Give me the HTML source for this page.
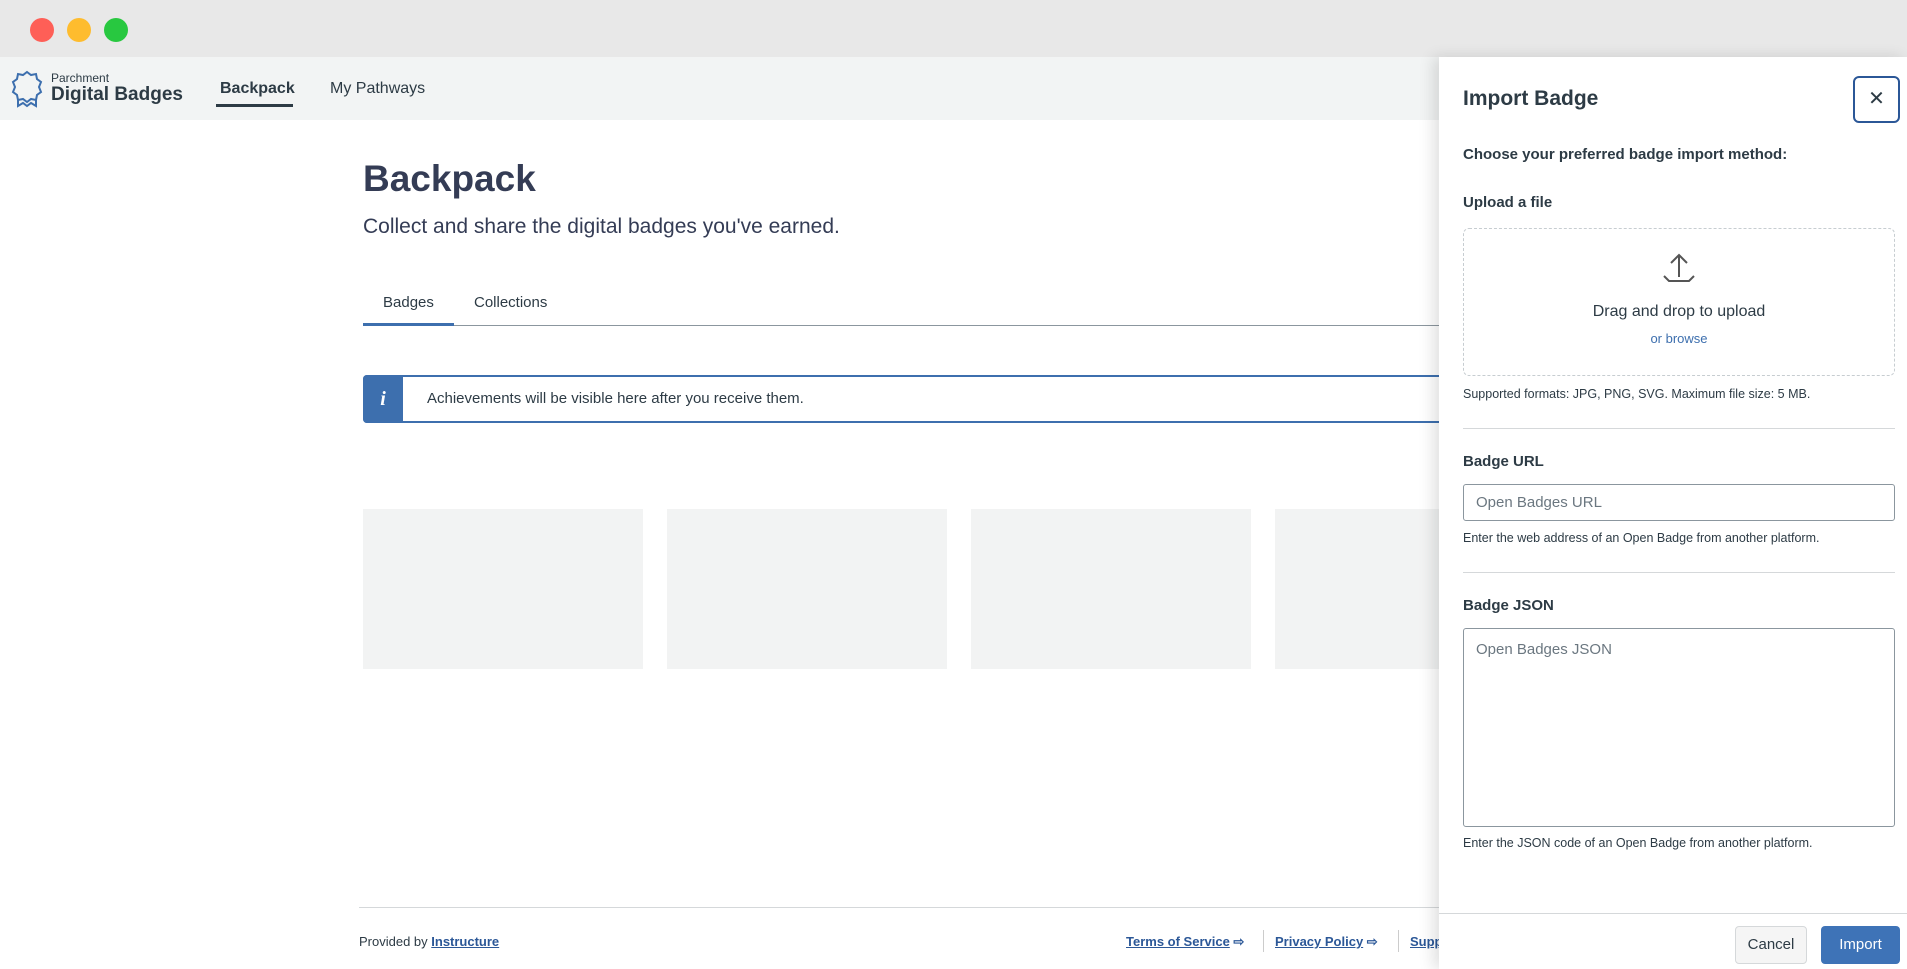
<!DOCTYPE html>
<html><head><meta charset="utf-8"><style>
*{box-sizing:border-box;margin:0;padding:0}
body{width:1907px;height:969px;overflow:hidden;background:#fff;font-family:"Liberation Sans",sans-serif;color:#2d3b45;position:relative}
.a{position:absolute;white-space:nowrap}
.dot{position:absolute;top:18px;width:24px;height:24px;border-radius:50%}
.card{position:absolute;top:509px;width:280px;height:160px;background:#f2f3f3}
.lbl{font-weight:bold;font-size:15px;color:#2d3b45}
.help{font-size:12.5px;color:#2d3b45}
</style></head><body>
<div class="a" style="left:0;top:0;width:1907px;height:57px;background:#e8e8e8"></div>
<div class="dot" style="left:30px;background:#fe5f57"></div>
<div class="dot" style="left:67px;background:#febc2e"></div>
<div class="dot" style="left:104px;background:#28c840"></div>
<div class="a" style="left:0;top:57px;width:1907px;height:63px;background:#f2f4f4"></div>
<svg class="a" style="left:10px;top:70px" width="34" height="38" viewBox="0 0 34 38"><path d="M17 2 l4 3 5-1 1 5 4 3-2 5 2 5-4 3-1 5-5-1-4 3-4-3-5 1-1-5-4-3 2-5-2-5 4-3 1-5 5 1z" fill="none" stroke="#3d6fae" stroke-width="2"/><path d="M8 30 v6 l5-3 4 3 4-3 5 3v-6" fill="none" stroke="#3d6fae" stroke-width="2"/></svg>
<div class="a" style="left:51px;top:71px;font-size:12px;color:#2d3b45">Parchment</div>
<div class="a" style="left:51px;top:84px;font-size:19px;font-weight:bold;color:#2d3b45">Digital Badges</div>
<div class="a" style="left:220px;top:80px;font-size:16px;font-weight:bold">Backpack</div>
<div class="a" style="left:216px;top:104px;width:77px;height:3px;background:#2d3b45"></div>
<div class="a" style="left:330px;top:80px;font-size:16px">My Pathways</div>
<div class="a" style="left:363px;top:158px;font-size:37px;font-weight:bold;color:#343c55">Backpack</div>
<div class="a" style="left:363px;top:215px;font-size:21px;color:#343c55">Collect and share the digital badges you've earned.</div>
<div class="a" style="left:383px;top:294px;font-size:15px">Badges</div>
<div class="a" style="left:474px;top:294px;font-size:15px">Collections</div>
<div class="a" style="left:363px;top:325px;width:1100px;height:1px;background:#8b969e"></div>
<div class="a" style="left:363px;top:323px;width:91px;height:3px;background:#3d6fae"></div>
<div class="a" style="left:363px;top:375px;width:1100px;height:48px;border:2px solid #3d6fae;border-radius:4px"></div>
<div class="a" style="left:363px;top:375px;width:40px;height:48px;background:#3d6fae;border-radius:4px 0 0 4px;color:#fff;font:italic bold 20px 'Liberation Serif',serif;text-align:center;line-height:48px">i</div>
<div class="a" style="left:427px;top:390px;font-size:15px">Achievements will be visible here after you receive them.</div>
<div class="card" style="left:363px"></div><div class="card" style="left:667px"></div><div class="card" style="left:971px"></div><div class="card" style="left:1275px"></div>
<div class="a" style="left:359px;top:907px;width:1100px;height:1px;background:#d5d8da"></div>
<div class="a" style="left:359px;top:934px;font-size:13px">Provided by <u style="color:#2b5797;font-weight:bold">Instructure</u></div>
<div class="a" style="left:1126px;top:934px;font-size:13px;color:#2b5797;font-weight:bold"><u>Terms of Service</u> ⇨</div>
<div class="a" style="left:1263px;top:930px;width:1px;height:22px;background:#ccc"></div>
<div class="a" style="left:1275px;top:934px;font-size:13px;color:#2b5797;font-weight:bold"><u>Privacy Policy</u> ⇨</div>
<div class="a" style="left:1398px;top:930px;width:1px;height:22px;background:#ccc"></div>
<div class="a" style="left:1410px;top:934px;font-size:13px;color:#2b5797;font-weight:bold"><u>Support</u></div>
<!-- panel -->
<div class="a" style="left:1439px;top:57px;width:468px;height:912px;background:#fff;box-shadow:-6px 0 14px rgba(0,0,0,.12)"></div>
<div class="a" style="left:1463px;top:87px;font-size:21px;font-weight:bold;color:#2d3b45">Import Badge</div>
<div class="a" style="left:1853px;top:76px;width:47px;height:47px;border:2px solid #2b5797;border-radius:6px;text-align:center;line-height:42px;font-size:20px;color:#2d3b45">✕</div>
<div class="a lbl" style="left:1463px;top:146px">Choose your preferred badge import method:</div>
<div class="a lbl" style="left:1463px;top:194px">Upload a file</div>
<div class="a" style="left:1463px;top:228px;width:432px;height:148px;border:1.5px dashed #c7cdd1;border-radius:6px"></div>
<svg class="a" style="left:1662px;top:252px" width="34" height="34" viewBox="0 0 34 34"><path d="M17 3v22M9 11l8-8 8 8M2 24l5 5h20l5-5" fill="none" stroke="#555" stroke-width="2"/></svg>
<div class="a" style="left:1463px;top:303px;width:432px;text-align:center;font-size:16px">Drag and drop to upload</div>
<div class="a" style="left:1463px;top:331px;width:432px;text-align:center;font-size:13px;color:#3d6fae">or browse</div>
<div class="a help" style="left:1463px;top:387px">Supported formats: JPG, PNG, SVG. Maximum file size: 5 MB.</div>
<div class="a" style="left:1463px;top:428px;width:432px;height:1px;background:#d5d8da"></div>
<div class="a lbl" style="left:1463px;top:453px">Badge URL</div>
<div class="a" style="left:1463px;top:484px;width:432px;height:37px;border:1px solid #8b969e;border-radius:3px;padding:0 12px;line-height:35px;font-size:15px;color:#6b7780">Open Badges URL</div>
<div class="a help" style="left:1463px;top:531px">Enter the web address of an Open Badge from another platform.</div>
<div class="a" style="left:1463px;top:572px;width:432px;height:1px;background:#d5d8da"></div>
<div class="a lbl" style="left:1463px;top:597px">Badge JSON</div>
<div class="a" style="left:1463px;top:628px;width:432px;height:199px;border:1px solid #8b969e;border-radius:3px;padding:12px;font-size:15px;color:#6b7780">Open Badges JSON</div>
<div class="a help" style="left:1463px;top:836px">Enter the JSON code of an Open Badge from another platform.</div>
<div class="a" style="left:1439px;top:913px;width:468px;height:1px;background:#d5d8da"></div>
<div class="a" style="left:1735px;top:926px;width:72px;height:38px;background:#f5f5f5;border:1px solid #d5d8da;border-radius:4px;text-align:center;line-height:36px;font-size:15px">Cancel</div>
<div class="a" style="left:1821px;top:926px;width:79px;height:38px;background:#3e73b7;border-radius:4px;text-align:center;line-height:38px;font-size:15px;color:#fff">Import</div>
</body></html>
